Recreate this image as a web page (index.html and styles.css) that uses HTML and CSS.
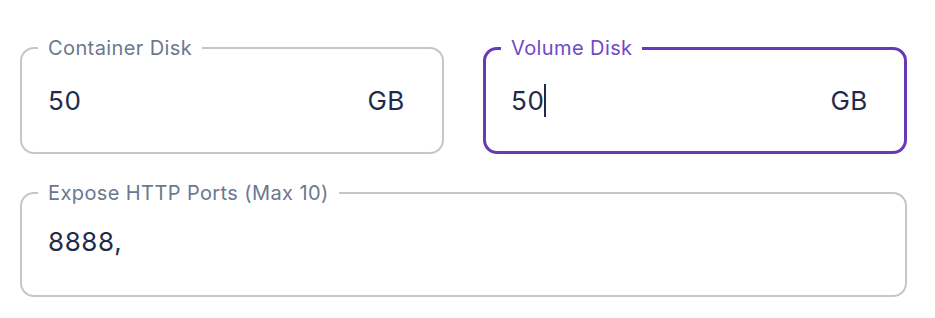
FILE: index.html
```html
<!DOCTYPE html>
<html lang="en">
<head>
  <meta charset="UTF-8" />
  <title>Pod storage</title>
  <link rel="stylesheet" href="styles.css">
</head>
<body>
  <div class="form">
    <div class="row">
      <fieldset class="field">
        <legend>Container Disk</legend>
        <div class="value-row">
          <span class="value">50</span>
          <span class="unit">GB</span>
        </div>
      </fieldset>

      <fieldset class="field focused">
        <legend>Volume Disk</legend>
        <div class="value-row">
          <span class="value">50<span class="caret"></span></span>
          <span class="unit">GB</span>
        </div>
      </fieldset>
    </div>

    <fieldset class="field ports">
      <legend>Expose HTTP Ports (Max 10)</legend>
      <div class="value-row">
        <span class="value">8888,</span>
      </div>
    </fieldset>
  </div>
</body>
</html>
```

FILE: styles.css
```css
body {
  margin: 0;
  background: #fff;
  font-family: Inter, "Noto Sans", sans-serif;
  color: #1e2b4a;
}

.form {
  display: flex;
  flex-direction: column;
  gap: 27px;
  padding: 36px 28px 0 20px;
}

.row {
  display: grid;
  grid-template-columns: 1fr 1fr;
  gap: 39px;
}

.field {
  margin: 0;
  min-width: 0;
  padding: 0 37px 0 26px;
  border: 2px solid #c6c6c6;
  border-radius: 14px;
}

.field legend {
  margin-left: -10px;
  padding: 0 10px;
  font-size: 20px;
  line-height: 24px;
  letter-spacing: 0.4px;
  color: #6b7890;
}

.value-row {
  display: flex;
  align-items: center;
  justify-content: space-between;
  height: 81px;
  padding-bottom: 11px;
}

.value,
.unit {
  font-size: 26px;
  letter-spacing: 0.6px;
}

.value {
  display: flex;
  align-items: center;
}

.caret {
  display: inline-block;
  width: 2px;
  height: 33px;
  background: #1e2b4a;
}

.field.focused {
  border: 3px solid #673ab7;
  padding: 0 36px 0 25px;
}

.field.focused legend {
  color: #7249c6;
}

.field.focused .value-row {
  height: 80px;
  padding-bottom: 10px;
}

.ports .value-row {
  height: 72px;
  padding-bottom: 18px;
}
```
